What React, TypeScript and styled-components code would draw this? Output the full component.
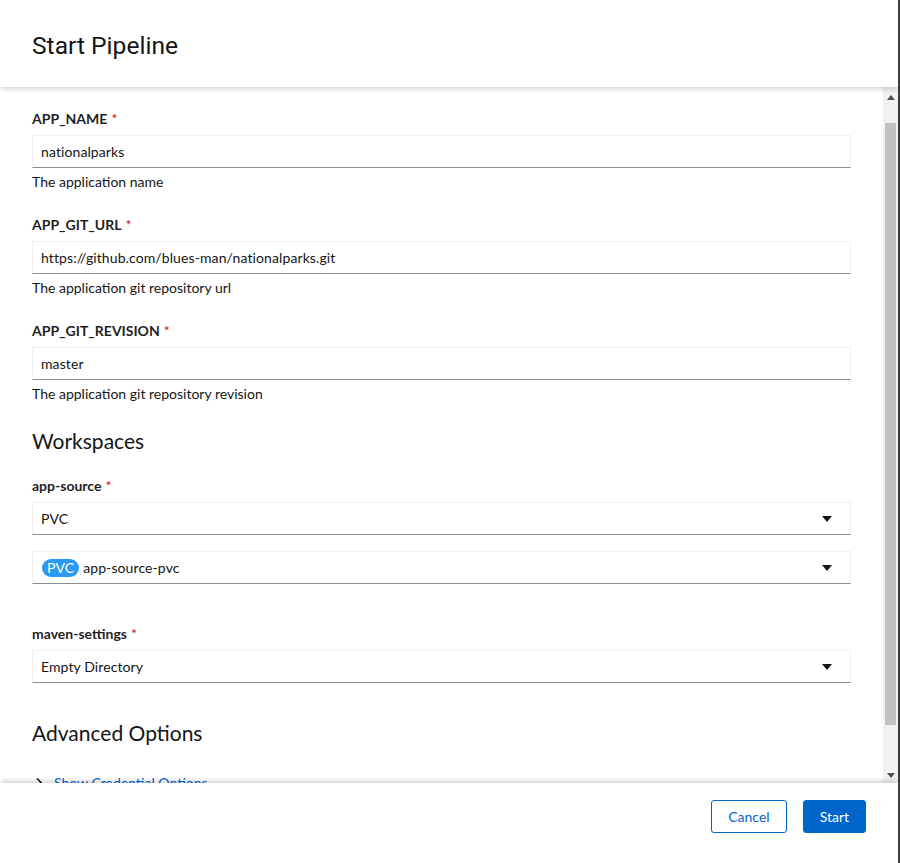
import React from "react";
import styled, { createGlobalStyle } from "styled-components";

const Global = createGlobalStyle`
  html, body { margin: 0; padding: 0; background: #3b3b3b; }
  body { font-family: "Lato", "Liberation Sans", sans-serif; color: #151515; }
  * { box-sizing: border-box; }
`;

const Modal = styled.div`
  width: 898px;
  height: 863px;
  background: #fff;
  display: flex;
  flex-direction: column;
  overflow: hidden;
`;

const Header = styled.header`
  height: 87px;
  flex: none;
  display: flex;
  align-items: center;
  padding: 0 32px;
  position: relative;
  z-index: 2;
  box-shadow: 0 3px 5px -1px rgba(3, 3, 3, 0.18);
`;

const Title = styled.h1`
  margin: 0;
  font-family: "Roboto", sans-serif;
  font-weight: 400;
  font-size: 24.6px;
  line-height: 1;
  padding-top: 6px;
`;

const ScrollRow = styled.div`
  flex: 1;
  min-height: 0;
  display: flex;
`;

const Content = styled.div`
  flex: 1;
  overflow: hidden;
  padding: 21px 32px 0 32px;
`;

const Scrollbar = styled.div`
  width: 15px;
  flex: none;
  background: #f1f1f1;
  display: flex;
  flex-direction: column;
  align-items: center;
  padding-top: 3px;
`;

const Arrow = styled.div<{ $down?: boolean }>`
  width: 15px;
  height: 15px;
  display: flex;
  align-items: center;
  justify-content: center;
  svg { transform: ${(p) => (p.$down ? "rotate(180deg)" : "none")}; }
`;

const Thumb = styled.div`
  width: 11px;
  height: 602px;
  margin-top: 18px;
  margin-bottom: auto;
  background: #c1c1c1;
`;

const Group = styled.div`
  margin-bottom: 22px;
`;

const Label = styled.div`
  font-size: 14px;
  font-weight: 700;
  line-height: 21px;
  margin-bottom: 6px;
  color: #1f1f1f;
`;

const Req = styled.span`
  color: #c9190b;
  margin-left: 4px;
  font-weight: 400;
`;

const Field = styled.div<{ $gap?: number }>`
  height: 33px;
  border: 1px solid #f0f0f0;
  border-bottom-color: #8a8d90;
  display: flex;
  align-items: center;
  padding: 0 8px;
  font-size: 14px;
  letter-spacing: 0.1px;
  margin-bottom: ${(p) => p.$gap ?? 0}px;
`;

const SelectText = styled.div`
  flex: 1;
  display: flex;
  align-items: center;
  gap: 4px;
`;

const Caret = styled.div`
  width: 30px;
  display: flex;
  justify-content: center;
`;

const Badge = styled.span`
  background: #2b9af3;
  color: #fff;
  border-radius: 9px;
  padding: 0 5px;
  font-size: 14px;
  line-height: 18px;
  margin-left: 1px;
`;

const Helper = styled.div`
  font-size: 14px;
  line-height: 21px;
  margin-top: 3px;
`;

const Section = styled.h2<{ $after?: number }>`
  margin: 0 0 ${(p) => p.$after ?? 19}px 0;
  font-size: 21px;
  font-weight: 400;
  line-height: 30px;
`;

const Spacer = styled.div<{ $h: number }>`
  height: ${(p) => p.$h}px;
`;

const Link = styled.div`
  display: flex;
  align-items: center;
  gap: 12px;
  color: #0066cc;
  font-size: 14px;
  padding-left: 4px;
`;

const Footer = styled.footer`
  height: 80px;
  flex: none;
  display: flex;
  justify-content: flex-end;
  align-items: center;
  gap: 16px;
  padding: 0 32px 14px;
  position: relative;
  z-index: 2;
  background: #fff;
  box-shadow: 0 -3px 5px -1px rgba(3, 3, 3, 0.18);
`;

const Button = styled.button<{ $primary?: boolean }>`
  height: 33px;
  padding: 0 16px;
  border-radius: 3px;
  font-family: inherit;
  font-size: 14px;
  border: 1px solid #0066cc;
  background: ${(p) => (p.$primary ? "#0066cc" : "#fff")};
  color: ${(p) => (p.$primary ? "#fff" : "#0066cc")};
`;

const CaretIcon = () => (
  <svg width="10" height="6" viewBox="0 0 10 6">
    <path d="M0 0 H10 L5 6 Z" fill="#151515" />
  </svg>
);

const Tri = () => (
  <svg width="8" height="5" viewBox="0 0 8 5">
    <path d="M0 5 H8 L4 0 Z" fill="#505050" />
  </svg>
);

const TextField = ({ label, value, helper }: { label: string; value: string; helper: string }) => (
  <Group>
    <Label>
      {label}
      <Req>*</Req>
    </Label>
    <Field>{value}</Field>
    <Helper>{helper}</Helper>
  </Group>
);

export default function App() {
  return (
    <Modal>
      <Global />
      <Header>
        <Title>Start Pipeline</Title>
      </Header>
      <ScrollRow>
        <Content>
          <TextField label="APP_NAME" value="nationalparks" helper="The application name" />
          <TextField
            label="APP_GIT_URL"
            value="https://github.com/blues-man/nationalparks.git"
            helper="The application git repository url"
          />
          <TextField
            label="APP_GIT_REVISION"
            value="master"
            helper="The application git repository revision"
          />
          <Section>Workspaces</Section>
          <Label>
            app-source<Req>*</Req>
          </Label>
          <Field $gap={16}>
            <SelectText>PVC</SelectText>
            <Caret>
              <CaretIcon />
            </Caret>
          </Field>
          <Field>
            <SelectText>
              <Badge>PVC</Badge>app-source-pvc
            </SelectText>
            <Caret>
              <CaretIcon />
            </Caret>
          </Field>
          <Spacer $h={39} />
          <Label>
            maven-settings<Req>*</Req>
          </Label>
          <Field>
            <SelectText>Empty Directory</SelectText>
            <Caret>
              <CaretIcon />
            </Caret>
          </Field>
          <Spacer $h={35} />
          <Section $after={26}>Advanced Options</Section>
          <Link>
            <svg width="6" height="9" viewBox="0 0 6 9">
              <path d="M1 0.5 L5 4.5 L1 8.5" stroke="#151515" strokeWidth="1.6" fill="none" />
            </svg>
            Show Credential Options
          </Link>
        </Content>
        <Scrollbar>
          <Arrow>
            <Tri />
          </Arrow>
          <Thumb />
          <Arrow $down>
            <Tri />
          </Arrow>
        </Scrollbar>
      </ScrollRow>
      <Footer>
        <Button>Cancel</Button>
        <Button $primary>Start</Button>
      </Footer>
    </Modal>
  );
}
